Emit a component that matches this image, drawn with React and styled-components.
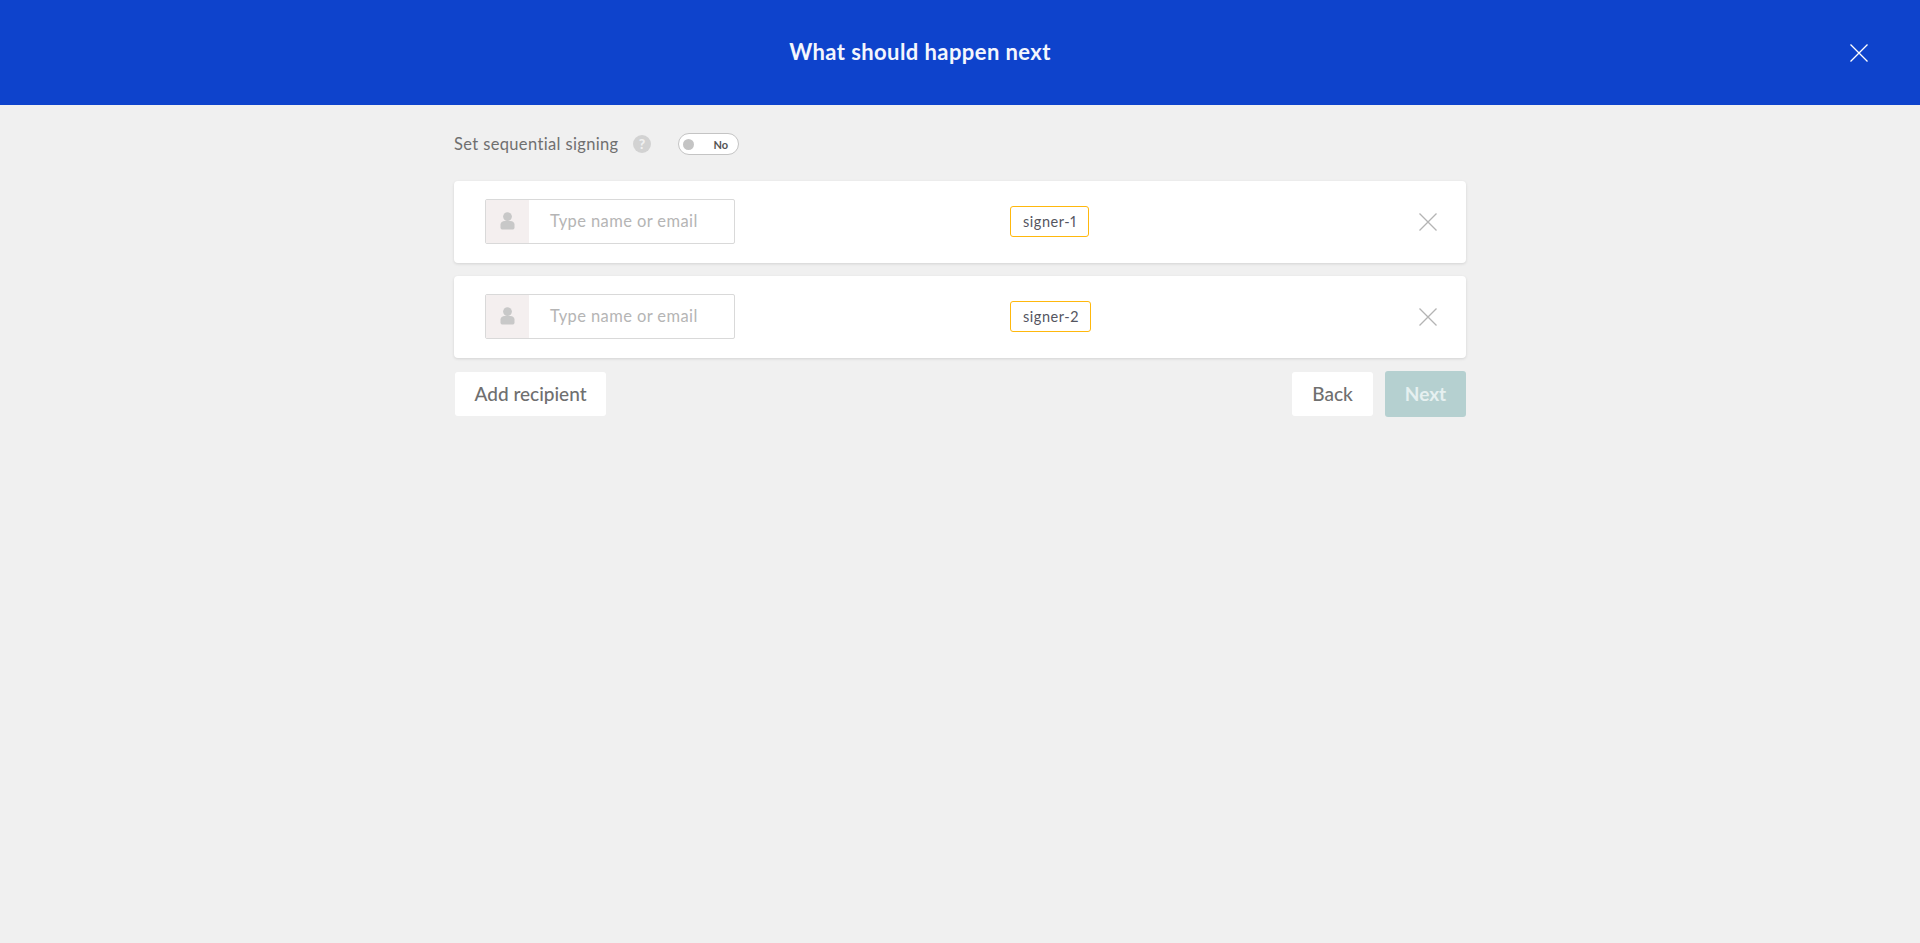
import { createGlobalStyle } from "styled-components";
import styled from "styled-components";

const GlobalStyle = createGlobalStyle`
  html, body {
    margin: 0;
    padding: 0;
    height: 100%;
    background-color: #f0f0f0;
    font-family: Lato, "Open Sans", sans-serif;
  }
  * {
    box-sizing: border-box;
  }
`;

const Header = styled.header`
  height: 105px;
  background-color: #0e43cc;
  display: flex;
  align-items: center;
  padding: 0 52px 0 0;
`;

const Title = styled.h1`
  flex: 1;
  margin: 0 0 3px;
  padding-right: 10px;
  text-align: center;
  color: #f4f6fd;
  font-size: 22px;
  font-weight: 700;
  letter-spacing: 0.42px;
`;

const CloseIcon = ({ size, color, className }) => (
  <svg className={className} width={size} height={size} viewBox="0 0 18 18" fill="none">
    <path d="M0.5 0.5 L17.5 17.5 M17.5 0.5 L0.5 17.5" stroke={color} strokeWidth="1.3" />
  </svg>
);

const Main = styled.main`
  width: 1012px;
  margin: 0 auto;
`;

const SigningRow = styled.div`
  display: flex;
  align-items: center;
  height: 22px;
  margin: 28px 0 26px;
`;

const SigningLabel = styled.span`
  color: #6f6f6f;
  font-size: 16.5px;
  letter-spacing: 0.36px;
  width: 179px;
`;

const HelpBadge = styled.span`
  width: 18px;
  height: 18px;
  border-radius: 50%;
  background-color: #d2d2d2;
  color: #f0f0f0;
  font-size: 14px;
  font-weight: 900;
  line-height: 18px;
  text-align: center;
  margin-right: 27px;
`;

const Toggle = styled.div`
  width: 61px;
  height: 22px;
  border: 1px solid #c4c4c4;
  border-radius: 11px;
  background-color: #fff;
  display: flex;
  align-items: center;
  justify-content: space-between;
  padding: 0 10px 0 4px;
`;

const ToggleKnob = styled.span`
  width: 11px;
  height: 11px;
  border-radius: 50%;
  background-color: #c4c4c4;
`;

const ToggleText = styled.span`
  color: #555;
  font-size: 11px;
  font-weight: 700;
`;

const Card = styled.div`
  height: 82px;
  background-color: #fff;
  border-radius: 4px;
  box-shadow: 0 1px 3px rgba(0, 0, 0, 0.12);
  margin-bottom: 13px;
  display: flex;
  align-items: center;
  padding: 0 29px 0 31px;
`;

const RecipientInput = styled.div`
  width: 250px;
  height: 45px;
  margin-bottom: 2px;
  border: 1px solid #d9d9d9;
  border-radius: 2px;
  display: flex;
  align-items: stretch;
`;

const InputAddon = styled.span`
  width: 43px;
  background-color: #f4efef;
  display: flex;
  align-items: center;
  justify-content: center;
`;

const InputText = styled.span`
  color: #b5b5b5;
  font-size: 16.5px;
  letter-spacing: 0.4px;
  line-height: 43px;
  padding-left: 21px;
`;

const SignerSlot = styled.div`
  margin-left: 275px;
  flex: 1;
  display: flex;
  margin-bottom: 2px;
`;

const SignerTag = styled.span`
  height: 31px;
  line-height: 30px;
  padding: 0 11px 0 12px;
  border: 1px solid #ffb80d;
  border-radius: 3px;
  color: #55555f;
  font-size: 14.5px;
  letter-spacing: 0.55px;
  font-variant-numeric: proportional-nums;
`;

const Footer = styled.div`
  display: flex;
  align-items: center;
  justify-content: space-between;
`;

const FooterRight = styled.div`
  display: flex;
  align-items: center;
  gap: 12px;
`;

const Button = styled.button`
  height: ${(p) => (p.$primary ? "46px" : "44px")};
  width: ${(p) => p.$width}px;
  margin-left: ${(p) => p.$offset || 0}px;
  border: none;
  border-radius: 3px;
  background-color: ${(p) => (p.$primary ? "#b5d0d0" : "#fff")};
  color: ${(p) => (p.$primary ? "#e6f0f0" : "#6f6f6f")};
  font-family: inherit;
  font-size: 19px;
  font-weight: ${(p) => (p.$primary ? 700 : 500)};
  padding: 0 0 2px;
`;

const UserIcon = () => (
  <svg width="15" height="18" viewBox="0 0 15 18">
    <circle cx="7.5" cy="4.6" r="4.4" fill="#c8c8c8" />
    <path d="M0.5 12.5 C0.5 10.2 2.5 9 4.5 9 H10.5 C12.5 9 14.5 10.2 14.5 12.5 V15.5 C14.5 17 13.5 17.6 12.5 17.6 H2.5 C1.5 17.6 0.5 17 0.5 15.5 Z" fill="#c8c8c8" />
  </svg>
);

const signers = ["signer-1", "signer-2"];

export default function App() {
  return (
    <>
      <GlobalStyle />
      <Header>
        <Title>What should happen next</Title>
        <CloseIcon size={18} color="#ffffff" />
      </Header>
      <Main>
        <SigningRow>
          <SigningLabel>Set sequential signing</SigningLabel>
          <HelpBadge>?</HelpBadge>
          <Toggle>
            <ToggleKnob />
            <ToggleText>No</ToggleText>
          </Toggle>
        </SigningRow>
        {signers.map((name) => (
          <Card key={name}>
            <RecipientInput>
              <InputAddon>
                <UserIcon />
              </InputAddon>
              <InputText>Type name or email</InputText>
            </RecipientInput>
            <SignerSlot>
              <SignerTag>{name}</SignerTag>
            </SignerSlot>
            <CloseIcon size={18} color="#b4b4b4" />
          </Card>
        ))}
        <Footer>
          <Button $width={151} $offset={1}>Add recipient</Button>
          <FooterRight>
            <Button $width={81}>Back</Button>
            <Button $width={81} $primary>Next</Button>
          </FooterRight>
        </Footer>
      </Main>
    </>
  );
}
